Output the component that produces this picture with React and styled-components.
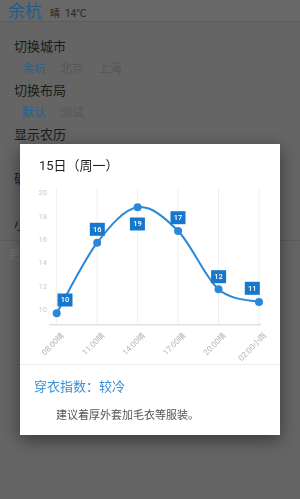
import React from 'react';
import styled, { createGlobalStyle } from 'styled-components';

const GlobalStyle = createGlobalStyle`
  html, body {
    margin: 0;
    padding: 0;
    background: #656565;
    font-family: Roboto, 'Noto Sans CJK SC', sans-serif;
  }
`;

const hours = [
  { time: '08:00晴', temp: 10, y: 139.3, lx: 45, ly: 126 },
  { time: '11:00晴', temp: 16, y: 68.7, lx: 77.3, ly: 55.3 },
  { time: '14:00晴', temp: 19, y: 33.3, lx: 117.4, ly: 50 },
  { time: '17:00晴', temp: 17, y: 57, lx: 158, ly: 43.7 },
  { time: '20:00晴', temp: 12, y: 115.3, lx: 198.6, ly: 102.7 },
  { time: '02:00小雨', temp: 11, y: 128, lx: 232.3, ly: 114.3 },
];

const gridX = [36.7, 77.2, 117.6, 158.1, 198.5, 239];
const yTicks = [20, 18, 16, 14, 12, 10];

// catmull-rom through the points, turned into bezier segments
const curvePath = (pts) => {
  let d = `M${pts[0][0]},${pts[0][1]}`;
  for (let i = 0; i < pts.length - 1; i++) {
    const p0 = pts[i - 1] || pts[i];
    const p1 = pts[i];
    const p2 = pts[i + 1];
    const p3 = pts[i + 2] || p2;
    const c1x = p1[0] + (p2[0] - p0[0]) / 6;
    const c1y = p1[1] + (p2[1] - p0[1]) / 6;
    const c2x = p2[0] - (p3[0] - p1[0]) / 6;
    const c2y = p2[1] - (p3[1] - p1[1]) / 6;
    d += ` C${c1x},${c1y} ${c2x},${c2y} ${p2[0]},${p2[1]}`;
  }
  return d;
};

const TempChart = () => {
  const pts = hours.map((h, i) => [gridX[i], h.y]);
  return (
    <ChartSvg width="260" height="190" viewBox="0 0 260 190">
      {gridX.map((x) => (
        <line key={x} x1={x} y1="14" x2={x} y2="150" stroke="#efefef" strokeWidth="1" />
      ))}
      <line x1="29" y1="150.7" x2="241" y2="150.7" stroke="#e2e2e2" strokeWidth="1.5" />
      {yTicks.map((t, i) => (
        <text
          key={t}
          x="27"
          y={19.3 + i * 23.34}
          textAnchor="end"
          dominantBaseline="middle"
          fontSize="7.5"
          fill="#c9c9c9"
        >
          {t}
        </text>
      ))}
      <path d={curvePath(pts)} fill="none" stroke="#2a88d8" strokeWidth="2" />
      {pts.map(([x, y]) => (
        <circle key={x} cx={x} cy={y} r="4" fill="#2a88d8" />
      ))}
      {hours.map((h) => (
        <g key={h.time}>
          <rect x={h.lx - 7.5} y={h.ly - 6.5} width="15" height="13" fill="#1677cc" />
          <text
            x={h.lx}
            y={h.ly + 0.5}
            textAnchor="middle"
            dominantBaseline="middle"
            fontSize="7.5"
            fontWeight="500"
            fill="#ffffff"
          >
            {h.temp}
          </text>
        </g>
      ))}
      {hours.map((h, i) => (
        <text
          key={h.time + 'x'}
          x={gridX[i] + 8}
          y="162"
          textAnchor="end"
          fontSize="8"
          fill="#b3b3b3"
          transform={`rotate(-45 ${gridX[i] + 8} 162)`}
        >
          {h.time}
        </text>
      ))}
    </ChartSvg>
  );
};

const App = () => (
  <>
    <GlobalStyle />
    <Page>
      <Header>
        <City>余杭</City>
        <Weather>晴 &nbsp;14℃</Weather>
      </Header>
      <Settings>
        <SettingTitle>切换城市</SettingTitle>
        <Options>
          <Option $active>余杭</Option>
          <Option>北京</Option>
          <Option>上海</Option>
        </Options>
        <SettingTitle>切换布局</SettingTitle>
        <Options>
          <Option $active>默认</Option>
          <Option>测试</Option>
        </Options>
        <SettingTitle>显示农历</SettingTitle>
        <SettingTitle $gap={22}>确定</SettingTitle>
        <SettingTitle $gap={24}>小时</SettingTitle>
      </Settings>
      <Divider />
      <More>更多</More>
    </Page>

    <Backdrop>
      <Dialog>
        <DialogTitle>15日（周一）</DialogTitle>
        <TempChart />
        <Footer>
          <IndexLabel>穿衣指数：较冷</IndexLabel>
          <Advice>建议着厚外套加毛衣等服装。</Advice>
        </Footer>
      </Dialog>
    </Backdrop>
  </>
);

export default App;

const Page = styled.div`
  width: 300px;
  height: 499px;
  overflow: hidden;
  background: #656565;
`;

const Header = styled.header`
  height: 22px;
  display: flex;
  align-items: center;
  padding-left: 8px;
  background: #686868;
  border-bottom: 1px solid #5c5c5c;
  box-sizing: border-box;
`;

const City = styled.span`
  font-size: 17px;
  line-height: 22px;
  color: #235d8a;
`;

const Weather = styled.span`
  margin-left: 8px;
  margin-top: 3px;
  font-size: 10px;
  color: #262626;
`;

const Settings = styled.div`
  padding: 14px 0 0 14px;
`;

const SettingTitle = styled.div`
  font-size: 13px;
  line-height: 22px;
  color: #1b1b1b;
  margin-top: ${(p) => p.$gap || 0}px;
`;

const Options = styled.div`
  display: flex;
  gap: 14px;
  padding-left: 8px;
`;

const Option = styled.span`
  font-size: 12px;
  line-height: 22px;
  color: ${(p) => (p.$active ? '#27628f' : '#575757')};
`;

const Divider = styled.div`
  height: 1px;
  background: #5b5b5b;
  margin-top: 4px;
`;

const More = styled.div`
  padding: 6px 0 0 8px;
  font-size: 12px;
  line-height: 16px;
  color: #737373;
`;

const Backdrop = styled.div`
  position: fixed;
  inset: 0;
  display: flex;
  justify-content: center;
  align-items: flex-start;
  padding-top: 144px;
`;

const Dialog = styled.div`
  width: 260px;
  background: #ffffff;
  box-shadow: 0 5px 16px rgba(0, 0, 0, 0.45);
`;

const DialogTitle = styled.div`
  padding: 14px 19px 0;
  font-size: 13px;
  line-height: 16px;
  color: #1e1e1e;
`;

const ChartSvg = styled.svg`
  display: block;
  font-family: Roboto, 'Noto Sans CJK SC', sans-serif;
`;

const Footer = styled.div`
  border-top: 1px solid #ececec;
  padding: 13px 0 11px;
`;

const IndexLabel = styled.div`
  padding-left: 14px;
  font-size: 13px;
  line-height: 18px;
  color: #3a8fd9;
`;

const Advice = styled.div`
  margin-top: 12px;
  padding-left: 36px;
  font-size: 11px;
  line-height: 16px;
  color: #555555;
`;
